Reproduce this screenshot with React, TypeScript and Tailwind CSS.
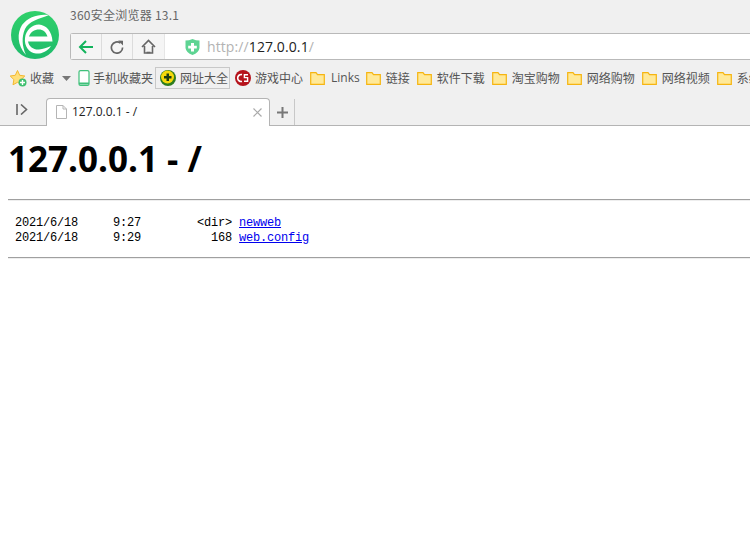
const cjk = "font-['Noto_Sans_CJK_SC','Noto_Sans',sans-serif]";

function Logo() {
  return (
    <svg width="48" height="48" viewBox="0 0 48 48" className="shrink-0">
      <defs>
        <linearGradient id="logoGreen" x1="0" y1="0" x2="0" y2="1">
          <stop offset="0" stopColor="#2fd06a" />
          <stop offset="1" stopColor="#1fbb6c" />
        </linearGradient>
      </defs>
      <circle cx="24" cy="24" r="24" fill="url(#logoGreen)" />
      <path
        d="M38 4 C28 2.5 17 6 11 14 C6 22 6 34 15 44 C11 35 10.5 26 14 18 C18 10 28 8 38 4Z"
        fill="#fff"
      />
      <path
        fillRule="evenodd"
        d="M14 27 C15 19 21 13.5 28 13.5 C35 14 41 20 41.5 30.5 L17 30.5 C18 36 23 39 28 38.5 C32 38 36 37 40 35 C36 41 30 43 25 42.5 C18 42 13 35 14 27Z M18 25.5 L36.5 25.5 C35 21 32 18.5 28 18.5 C23.5 18.5 19.5 21 18 25.5Z"
        fill="#fff"
      />
    </svg>
  );
}

function Folder() {
  return (
    <svg width="15" height="13" viewBox="0 0 15 13" className="shrink-0">
      <path
        d="M0.7 12.3 V0.7 H6 L7.5 2.7 H14.3 V12.3 Z"
        fill="#ffe999"
        stroke="#f6b511"
        strokeWidth="1.2"
      />
    </svg>
  );
}

function Bookmark({ label, className = "" }: { label: string; className?: string }) {
  return (
    <div className={`flex shrink-0 items-center gap-[5px] ${className}`}>
      <Folder />
      <span>{label}</span>
    </div>
  );
}

export default function App() {
  return (
    <div className="h-[546px] w-[750px] overflow-hidden bg-white">
      {/* browser chrome */}
      <div className={`h-[126px] border-b border-[#b4b4b4] bg-[#f0f0f0] ${cjk}`}>
        <div className="flex h-[66px] pl-[11px] pt-[11px]">
          <Logo />
          <div className="ml-[11px] flex-1">
            <div className="-mt-[5px] h-[27px] text-[12px] leading-[18px] tracking-[0.25px] text-[#666]">360安全浏览器 13.1</div>
            <div className="flex h-[27px] items-center rounded-l-[3px] border border-r-0 border-[#b9b9b9] bg-white">
              <div className="flex h-full w-[31px] items-center justify-center border-r border-[#dcdcdc] bg-[#f5f5f5]">
                <svg width="16" height="14" viewBox="0 0 16 14" fill="none" stroke="#12b35c" strokeWidth="2">
                  <path d="M15 7H2M8 1L2 7l6 6" />
                </svg>
              </div>
              <div className="flex h-full w-[31px] items-center justify-center border-r border-[#dcdcdc] bg-[#f5f5f5]">
                <svg width="14" height="14" viewBox="0 0 14 14" fill="none">
                  <path d="M10.5 3.2A5.6 5.6 0 1 0 12.6 7.5" stroke="#666" strokeWidth="1.7" />
                  <path d="M8.2 0.5L13 0.8V5.6Z" fill="#666" />
                </svg>
              </div>
              <div className="flex h-full w-[32px] items-center justify-center border-r border-[#e6e6e6] bg-[#f5f5f5]">
                <svg width="15" height="15" viewBox="0 0 15 15" fill="none" stroke="#666" strokeWidth="1.6">
                  <path d="M1 8L7.5 1.5 14 8M3.5 7V14H11.5V7" />
                  <path d="M5.5 13.5H9.5" />
                </svg>
              </div>
              <svg width="15" height="16" viewBox="0 0 15 16" className="ml-[20px]">
                <path d="M0.5 1.5 Q4 1.5 7.5 0 Q11 1.5 14.5 1.5 V9 Q14 13.5 7.5 16 Q1 13.5 0.5 9Z" fill="#5ed493" />
                <path d="M6 4H9V6.8H11.8V9.6H9V12.4H6V9.6H3.2V6.8H6Z" fill="#fff" />
              </svg>
              <div className="ml-[7px] font-['Open_Sans',sans-serif] text-[14px] tracking-[0.1px] text-[#b3b3b3]">
                http://<span className="text-[#222]">127.0.0.1</span>/
              </div>
            </div>
          </div>
        </div>

        {/* bookmarks */}
        <div className="flex h-[24px] items-center overflow-hidden whitespace-nowrap pl-[10px] text-[12px] text-[#555]">
          <svg width="17" height="17" viewBox="0 0 17 17" className="shrink-0">
            <path d="M7.5 0.5L9.7 5.3 14.8 6 11.1 9.6 12 14.8 7.5 12.3 3 14.8 3.9 9.6 0.2 6 5.3 5.3Z" fill="#ffdf7a" stroke="#f3b82e" />
            <circle cx="12.5" cy="12.5" r="4" fill="#3fbf6f" />
            <path d="M12.5 10V15M10 12.5H15" stroke="#fff" strokeWidth="1.4" />
          </svg>
          <span className="ml-[3px]">收藏</span>
          <svg width="9" height="5" viewBox="0 0 9 5" className="ml-[8px] shrink-0">
            <path d="M0 0H9L4.5 5Z" fill="#777" />
          </svg>
          <svg width="12" height="16" viewBox="0 0 12 16" fill="none" className="ml-[7px] shrink-0">
            <rect x="1" y="0.6" width="10" height="14.8" rx="1.5" fill="#fff" stroke="#3fc07a" strokeWidth="1.2" />
            <path d="M1 13.5H11" stroke="#3fc07a" strokeWidth="2" />
          </svg>
          <span className="ml-[3px]">手机收藏夹</span>
          <div className="ml-[2px] flex h-[22px] w-[75px] shrink-0 items-center border border-[#c8c8c8] pl-[4px]">
            <svg width="16" height="16" viewBox="0 0 16 16" className="shrink-0">
              <circle cx="8" cy="8" r="8" fill="#2e7d1f" />
              <circle cx="7.5" cy="7" r="6.5" fill="#f5d90a" />
              <path d="M6.5 3.5H9V6H11.5V8.5H9V11H6.5V8.5H4V6H6.5Z" fill="#1c3d12" />
            </svg>
            <span className="ml-[4px]">网址大全</span>
          </div>
          <svg width="16" height="16" viewBox="0 0 16 16" className="ml-[5px] shrink-0">
            <circle cx="8" cy="8" r="8" fill="#b5121b" />
            <path d="M7 4.6A3.5 3.5 0 1 0 7 11.4" fill="none" stroke="#fff" strokeWidth="1.6" />
            <path d="M13 4.8H9.4V7.6H12.6V11.2H9" fill="none" stroke="#fff" strokeWidth="1.4" />
          </svg>
          <span className="ml-[4px]">游戏中心</span>
          <Bookmark label="Links" className="ml-[7px] [&>span]:ml-px [&>span]:font-['Open_Sans',sans-serif]" />
          <Bookmark label="链接" className="ml-[6px]" />
          <Bookmark label="软件下载" className="ml-[7px]" />
          <Bookmark label="淘宝购物" className="ml-[7px]" />
          <Bookmark label="网络购物" className="ml-[7px]" />
          <Bookmark label="网络视频" className="ml-[7px]" />
          <Bookmark label="系统" className="ml-[7px]" />
        </div>

        {/* tabs */}
        <div className="flex h-[35px] items-end">
          <div className="flex h-[28px] w-[46px] items-center pb-[3px] pl-[16px]">
            <svg width="12" height="11" viewBox="0 0 12 11" fill="none" stroke="#666" strokeWidth="1.6">
              <path d="M1 0V11M5 0.5L10.5 5.5 5 10.5" />
            </svg>
          </div>
          <div className="relative z-10 -mb-px flex h-[28px] w-[224px] items-center rounded-t-[4px] border border-b-0 border-[#b4b4b4] bg-white pb-[1px] pl-[9px] pr-[7px]">
            <svg width="11" height="14" viewBox="0 0 11 14" fill="none" stroke="#b5b5b5" className="shrink-0">
              <path d="M0.5 0.5H7L10.5 4V13.5H0.5Z" />
              <path d="M7 0.5V4H10.5" />
            </svg>
            <span className="ml-[5px] flex-1 font-['Open_Sans',sans-serif] text-[12px] text-[#222]">127.0.0.1 - /</span>
            <svg width="9" height="9" viewBox="0 0 9 9" stroke="#aaa" strokeWidth="1.2">
              <path d="M0.5 0.5L8.5 8.5M8.5 0.5L0.5 8.5" />
            </svg>
          </div>
          <div className="flex h-[26px] w-[25px] items-center justify-center border-r border-[#c8c8c8]">
            <svg width="11" height="11" viewBox="0 0 11 11" stroke="#777" strokeWidth="2">
              <path d="M5.5 0V11M0 5.5H11" />
            </svg>
          </div>
        </div>
      </div>

      {/* directory listing */}
      <div className="pl-[8px]">
        <h1 className="mt-[8px] font-['Open_Sans',sans-serif] text-[35px] font-bold leading-[49px] text-black">127.0.0.1 - /</h1>
        <div className="mt-[16px] h-[2px] border-b border-[#eeeeee] bg-[#a0a0a0]" />
        <pre className="mt-[15px] font-['Liberation_Mono',monospace] text-[12px] leading-[15px] tracking-[-0.2px] text-black">
          {" 2021/6/18     9:27        <dir> "}
          <a href="#" className="text-[#0000ee] underline">newweb</a>
          {"\n 2021/6/18     9:29          168 "}
          <a href="#" className="text-[#0000ee] underline">web.config</a>
        </pre>
        <div className="mt-[11px] h-[2px] border-b border-[#eeeeee] bg-[#a0a0a0]" />
      </div>
    </div>
  );
}
